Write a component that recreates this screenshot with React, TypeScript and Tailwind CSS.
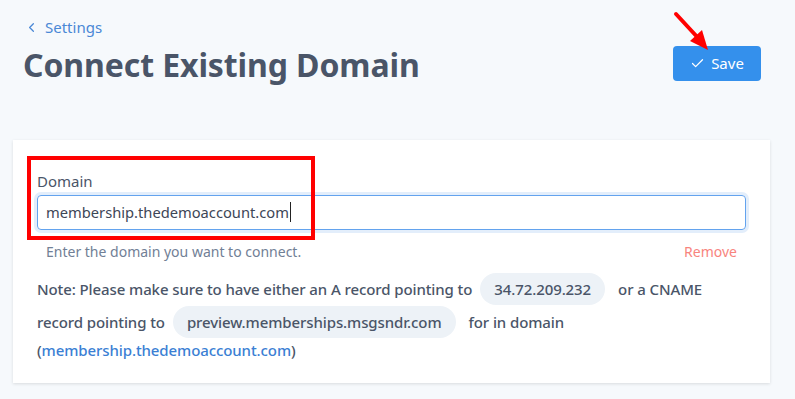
import { Check, ChevronLeft } from 'lucide-react';

function Pill({ children }: { children: React.ReactNode }) {
  return (
    <span className="inline-flex items-center h-[32px] px-[14px] ml-[8px] mr-[13px] rounded-full bg-[#edf2f7] text-[#4a5568]">
      {children}
    </span>
  );
}

export default function App() {
  return (
    <main
      className="relative w-[795px] h-[399px] overflow-hidden bg-[#f6f9fc] text-[#4a5568]"
      style={{ fontFamily: '"Noto Sans", "Open Sans", sans-serif' }}
    >
      <header className="flex items-start justify-between pl-[23px] pr-[34px] pt-[16px]">
        <div>
          <a className="flex items-center gap-[6px] pl-[1px] text-[15px] text-[#4a88d6]">
            <ChevronLeft size={15} strokeWidth={2} />
            Settings
          </a>
          <h1 className="mt-[6px] text-[32px] font-bold leading-[40px] tracking-[-0.1px] text-[#4a5568]">
            Connect Existing Domain
          </h1>
        </div>
        <button className="mt-[30px] flex items-center gap-[6px] h-[35px] w-[88px] justify-center rounded-[4px] bg-[#3490ec] text-[15px] text-white">
          <Check size={15} strokeWidth={2} />
          Save
        </button>
      </header>

      <svg className="absolute left-[668px] top-[8px]" width="50" height="50" viewBox="0 0 50 50">
        <line x1="8" y1="6" x2="32" y2="32" stroke="#ff0000" strokeWidth="4" strokeLinecap="round" />
        <polygon points="40,42 22,33 34,22" fill="#ff0000" />
      </svg>

      <section className="ml-[13px] mr-[25px] mt-[55px] h-[243px] bg-white shadow-[0_1px_3px_rgba(0,0,0,0.12)] px-[24px] pt-[31px]">
        <div className="relative">
          <div className="absolute left-[-10px] top-[-15px] w-[288px] h-[84px] border-[4px] border-[#ff0000]" />
          <label className="block text-[15px] leading-[20px] text-[#4a5568]">Domain</label>
          <div className="mt-[4px] h-[35px] rounded-[4px] border border-[#63a3ee] ring-[3px] ring-[#e3eefb] flex items-center px-[8px] text-[14.7px] text-[#3d4656]">
            membership.thedemoaccount.com
            <span className="ml-[1px] w-px h-[20px] bg-[#222]" />
          </div>
        </div>
        <div className="flex justify-between pl-[9px] pr-[9px] mt-[12px] text-[14px] leading-[20px]">
          <span className="text-[#718096]">Enter the domain you want to connect.</span>
          <span className="text-[#f8847e]">Remove</span>
        </div>
        <p className="mt-[11px] text-[15px] leading-[33px] font-medium text-[#4a5568] tracking-[-0.1px]">
          Note: Please make sure to have either an A record pointing to<Pill>34.72.209.232</Pill>or a CNAME record
          pointing to<Pill>preview.memberships.msgsndr.com</Pill>for in domain
          <span className="block leading-[23px]">
            (<a className="text-[#3b7fd4]">membership.thedemoaccount.com</a>)
          </span>
        </p>
      </section>
    </main>
  );
}
